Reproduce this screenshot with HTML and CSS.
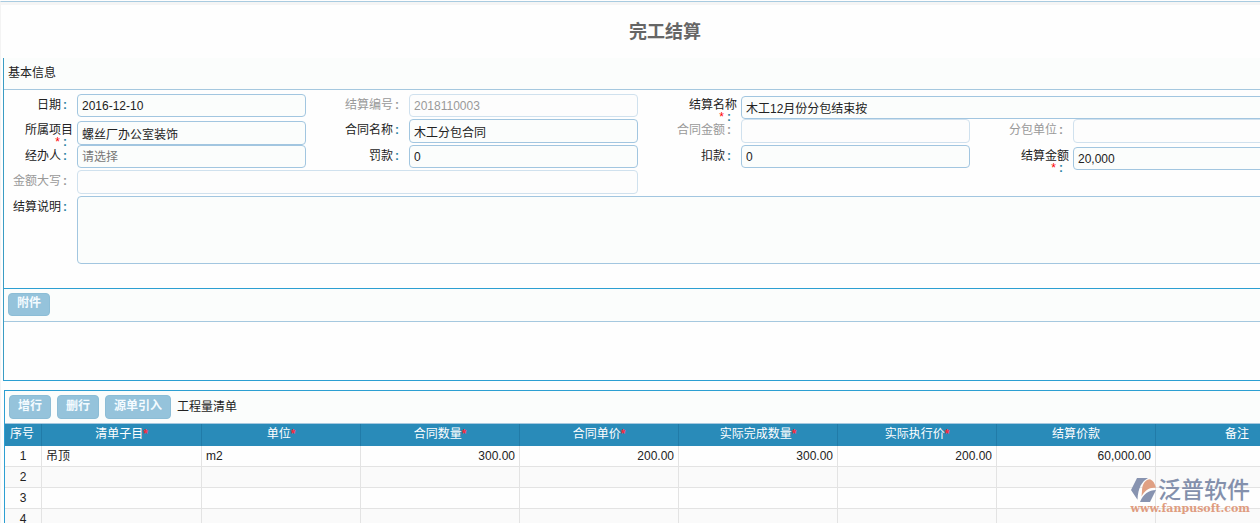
FILE: index.html
```html
<!DOCTYPE html>
<html lang="zh-CN">
<head>
<meta charset="utf-8">
<title>完工结算</title>
<link rel="stylesheet" href="styles.css">
</head>
<body>
<main class="page">
  <h1 class="title">完工结算</h1>

  <form class="panel">
    <h2 class="bar">基本信息</h2>
    <div class="fields">
      <div class="field"><label class="label" for="date"><span>日期<i>:</i></span></label><input class="box" id="date" value="2016-12-10"></div>
      <div class="field off"><label class="label" for="code"><span>结算编号<i>:</i></span></label><input class="box" id="code" value="2018110003" disabled></div>
      <div class="field required span2"><label class="label" for="name"><span>结算名称</span><span class="mark"><b>*</b><i>:</i></span></label><input class="box" id="name" value="木工12月份分包结束按"></div>

      <div class="field required"><label class="label" for="project"><span>所属项目</span><span class="mark"><b>*</b><i>:</i></span></label><input class="box tall" id="project" value="螺丝厂办公室装饰"></div>
      <div class="field"><label class="label" for="contract"><span>合同名称<i>:</i></span></label><input class="box tall" id="contract" value="木工分包合同"></div>
      <div class="field off"><label class="label" for="sum"><span>合同金额<i>:</i></span></label><input class="box tall" id="sum" disabled></div>
      <div class="field off"><label class="label" for="unit"><span>分包单位<i>:</i></span></label><input class="box tall" id="unit" disabled></div>

      <div class="field"><label class="label" for="agent"><span>经办人<i>:</i></span></label><input class="box" id="agent" placeholder="请选择"></div>
      <div class="field"><label class="label" for="fine"><span>罚款<i>:</i></span></label><input class="box" id="fine" value="0"></div>
      <div class="field"><label class="label" for="deduct"><span>扣款<i>:</i></span></label><input class="box" id="deduct" value="0"></div>
      <div class="field required"><label class="label" for="settle"><span>结算金额</span><span class="mark"><b>*</b><i>:</i></span></label><input class="box" id="settle" value="20,000"></div>

      <div class="field off half"><label class="label" for="words"><span>金额大写<i>:</i></span></label><input class="box tall" id="words" disabled></div>

      <div class="field full"><label class="label" for="note"><span>结算说明<i>:</i></span></label><textarea class="box area" id="note"></textarea></div>
    </div>
    <div class="bar attach"><button class="btn" type="button">附件</button></div>
    <div class="files"></div>
  </form>

  <section class="panel list">
    <div class="bar tools">
      <button class="btn" type="button">增行</button>
      <button class="btn" type="button">删行</button>
      <button class="btn" type="button">源单引入</button>
      <span>工程量清单</span>
    </div>
    <table class="grid">
      <colgroup><col class="c-no"><col class="c-item"><col class="c"><col class="c"><col class="c"><col class="c"><col class="c"><col class="c"><col></colgroup>
      <thead>
        <tr><th>序号</th><th>清单子目<b>*</b></th><th>单位<b>*</b></th><th>合同数量<b>*</b></th><th>合同单价<b>*</b></th><th>实际完成数量<b>*</b></th><th>实际执行价<b>*</b></th><th>结算价款</th><th>备注</th></tr>
      </thead>
      <tbody>
        <tr><td>1</td><td>吊顶</td><td>m2</td><td>300.00</td><td>200.00</td><td>300.00</td><td>200.00</td><td>60,000.00</td><td></td></tr>
        <tr><td>2</td><td></td><td></td><td></td><td></td><td></td><td></td><td></td><td></td></tr>
        <tr><td>3</td><td></td><td></td><td></td><td></td><td></td><td></td><td></td><td></td></tr>
        <tr><td>4</td><td></td><td></td><td></td><td></td><td></td><td></td><td></td><td></td></tr>
      </tbody>
    </table>
  </section>
</main>

<div class="brand">
  <div class="brand-top">
    <svg width="26" height="26" viewBox="0 0 26 24" preserveAspectRatio="none" aria-hidden="true">
      <path fill="#8793b0" d="M6 1H17C11 4 7 10 6.500 21L0 12Z"/>
      <path fill="#e0a083" d="M11 13C11 6 15 2 19 2C22 3 24 6 25 10C19 9 14 12 10.500 18Z"/>
      <path fill="#8793b0" d="M9 23C12 16 18 12 25 12L19 23Z"/>
    </svg>
    <span class="brand-name">泛普软件</span>
  </div>
  <span class="brand-url">www.fanpusoft.com</span>
</div>
</body>
</html>
```
FILE: styles.css
```css
* { box-sizing: border-box; }

html { overflow: hidden; }

body {
  margin: 0;
  padding-top: 1px;
  background: #fefefe;
  color: #222;
  font: 12px/16px "Liberation Sans", "Noto Sans CJK SC", sans-serif;
}

i, b { font-style: normal; font-weight: normal; }

.page {
  min-width: 1332px;
  padding-left: 2px;
  border-top: 1px solid #a9cbe0;
  border-left: 1px solid #f3f3f3;
  box-shadow: inset 0 3px #f5f5f5;
}

.title {
  margin: 0;
  padding: 18px 5px 14px 0;
  color: #666;
  font-size: 18px;
  line-height: 24px;
  font-weight: bold;
  text-align: center;
}

.panel {
  border-left: 1px solid #3a9cc4;
  border-bottom: 1px solid #2c9fd2;
}

.bar {
  display: flex;
  align-items: center;
  gap: 6px;
  height: 32px;
  margin: 0;
  padding: 0 4px 2px;
  background: #fbfdfc;
  border-bottom: 1px solid #a5c8df;
  font-size: 12px;
  font-weight: normal;
}

.attach {
  height: 34px;
  border-top: 1px solid #2c9fd2;
}

.files { height: 58px; }

.fields {
  display: grid;
  grid-template-columns: repeat(4, 1fr);
  grid-template-rows: repeat(2, 25px 26px) auto;
  align-items: start;
  padding: 4px 0 24px;
}

.field {
  display: grid;
  grid-template-columns: 73px 1fr;
  align-items: start;
  padding-right: 30px;
}

.span2 { grid-column: span 2; }
.half { grid-column: 1 / span 2; }
.full { grid-column: 1 / -1; }

.label {
  display: flex;
  flex-direction: column;
  align-items: flex-end;
  padding: 3px 10px 0 0;
  line-height: 16px;
}

.label i { margin-left: 2px; color: #2f83a5; font-weight: bold; }
.required .label { padding-right: 4px; }
.mark { display: flex; gap: 1px; padding-right: 6px; line-height: 8px; }
.mark b { color: #f00; }

.box {
  width: 100%;
  height: 23px;
  padding: 0 4px;
  border: 1px solid #a2c6e0;
  border-radius: 4px;
  background: #fbfdfc;
  color: #222;
  font: inherit;
}

.box::placeholder { color: #777; }
.tall { height: 24px; }
.required .box { margin-top: 2px; }
.area { display: block; height: 68px; resize: none; }

.off .label, .off .label i { color: #999; }
.off .box { border-color: #d0e1ee; background: #fdfdfd; color: #999; }

.btn {
  height: 23px;
  padding: 0 8px 2px;
  border: 1px solid #8cbdd6;
  border-radius: 4px;
  background: #95c3db;
  color: #f4fbff;
  font: inherit;
  font-weight: bold;
}

.list {
  margin: 9px 0 0 1px;
  border-top: 1px solid #2c9fd2;
  border-left-color: #2c9fd2;
}

.tools { height: 33px; padding-bottom: 0; }
.tools .btn { height: 24px; }

.grid {
  width: 100%;
  table-layout: fixed;
  border-spacing: 0;
  padding-right: 13px;
}

.c-no { width: 37px; }
.c-item { width: 160px; }
.c { width: 159px; }

.grid th {
  height: 22px;
  padding: 0 0 2px;
  background: #298bb9;
  border-right: 1px solid #217ba8;
  color: #fff;
  font-weight: normal;
}

.grid th:first-child { padding-right: 2px; }
.grid th b { color: #ff2a3c; font-weight: bold; }

.grid td {
  height: 21px;
  padding: 0 4px;
  border-right: 1px solid #e3e3e3;
  border-bottom: 1px solid #e3e3e3;
  text-align: right;
}

.grid td:first-child { text-align: center; }
.grid td:nth-child(2), .grid td:nth-child(3) { text-align: left; }
.grid tbody tr:nth-child(even) { background: #fafafa; }

.brand {
  position: absolute;
  right: 10px;
  bottom: 9px;
  display: flex;
  flex-direction: column;
  align-items: flex-end;
}

.brand-top { display: flex; align-items: center; gap: 1px; }

.brand-name {
  color: #8490ac;
  font-size: 23px;
  line-height: 26px;
  font-weight: 500;
}

.brand-url {
  color: #df9c80;
  font: bold 11px/11px "DejaVu Serif", serif;
}
```
